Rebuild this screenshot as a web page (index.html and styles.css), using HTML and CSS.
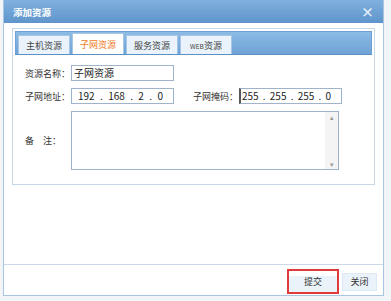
FILE: index.html
```
<!DOCTYPE html>
<html lang="zh-CN">
<head>
    <meta charset="UTF-8">
    <title>添加资源</title>
    <link rel="stylesheet" href="styles.css">
</head>
<body>
    <div class="dialog">
        <div class="dialog-title">
            <span>添加资源</span>
            <span class="close">×</span>
        </div>
        <div class="dialog-body">
            <div class="panel">
                <div class="tabs">
                    <div class="tab">主机资源</div>
                    <div class="tab active">子网资源</div>
                    <div class="tab">服务资源</div>
                    <div class="tab"><span class="latin">WEB</span>资源</div>
                </div>
                <div class="form">
                    <div class="row">
                        <label>资源名称：</label>
                        <div class="input">子网资源</div>
                    </div>
                    <div class="row">
                        <label>子网地址：</label>
                        <div class="input ip"><span>192</span>.<span>168</span>.<span>2</span>.<span>0</span></div>
                        <label class="label-right">子网掩码：</label>
                        <div class="input ip caret"><span>255</span>.<span>255</span>.<span>255</span>.<span>0</span></div>
                    </div>
                    <div class="row row-memo">
                        <label>备&emsp;注：</label>
                        <div class="textarea">
                            <div class="scroll"><span>▴</span><span>▾</span></div>
                        </div>
                    </div>
                </div>
            </div>
        </div>
        <div class="dialog-footer">
            <button class="btn btn-submit">提交</button>
            <button class="btn">关闭</button>
        </div>
    </div>
</body>
</html>
```
FILE: styles.css
```
body {
    margin: 0;
    background-color: #f2f5f8;
    font-family: "Noto Sans CJK SC", "Liberation Sans", sans-serif;
    font-size: 9px;
    color: #333;
}
.dialog {
    width: 381px;
    height: 296px;
    margin-left: 3px;
    background-color: #fff;
    border: 1px solid #a9c5e2;
    border-top: none;
    box-sizing: border-box;
    display: flex;
    flex-direction: column;
}
.dialog-title {
    height: 23px;
    background: linear-gradient(#80b0de, #5f95cc);
    color: #fff;
    font-size: 9.5px;
    font-weight: bold;
    padding: 0 9px;
    display: flex;
    align-items: center;
    justify-content: space-between;
    flex-shrink: 0;
}
.close {
    font-size: 13px;
    color: #e8f1fa;
}
.dialog-body {
    flex: 1;
    padding: 5px 8px 0 8px;
}
.panel {
    border: 1px solid #c6d7e8;
    height: 155px;
}
.tabs {
    display: flex;
    gap: 2px;
    margin: 2px 2px 0 2px;
    height: 22px;
    padding-left: 2px;
    background: linear-gradient(#8cbbe5, #6ea3d6);
    border: 1px solid #6c9fd2;
    border-bottom-color: #5d91c6;
    align-items: flex-end;
}
.tab {
    width: 52px;
    height: 19px;
    line-height: 19px;
    text-align: center;
    background-color: #eaf3fb;
    border: 1px solid #a8c6e4;
    border-bottom: none;
    color: #444;
    box-sizing: border-box;
}
.tab.active {
    background-color: #fff;
    color: #f07a1c;
    height: 21px;
    line-height: 21px;
}
.latin {
    font-size: 6.5px;
}
.form {
    padding: 10px 0 0 12px;
}
.row {
    display: flex;
    align-items: center;
    margin-bottom: 7px;
}
.row label {
    width: 46px;
    white-space: nowrap;
}
.row .label-right {
    margin-left: 19px;
}
.input {
    width: 99px;
    height: 14px;
    line-height: 14px;
    border: 1px solid #9fb4cb;
    padding-left: 2px;
    color: #222;
    font-size: 10px;
}
.ip {
    display: flex;
    justify-content: space-between;
    padding: 0 10px 0 6px;
    width: 85px;
}
.caret {
    border-left: 2px solid #555;
    padding-left: 1px;
    width: 89px;
}
.textarea {
    width: 266px;
    height: 57px;
    border: 1px solid #9fb4cb;
    display: flex;
    justify-content: flex-end;
}
.scroll {
    width: 13px;
    background-color: #f4f4f4;
    display: flex;
    flex-direction: column;
    justify-content: space-between;
    align-items: center;
    font-size: 7px;
    color: #999;
}
.dialog-footer {
    border-top: 1px solid #c9d9e9;
    height: 30px;
    display: flex;
    justify-content: flex-end;
    align-items: center;
    gap: 3px;
    padding-right: 6px;
    flex-shrink: 0;
}
.btn {
    font-family: inherit;
    font-size: 9px;
    color: #333;
    background-color: #eaf2fa;
    border: 1px solid #dce8f3;
    height: 18px;
    width: 35px;
    padding: 0;
    margin-top: 3px;
}
.btn-submit {
    width: 52px;
    height: 25px;
    border: 2px solid #e03a3a;
    background: linear-gradient(#fff 0, #fff 5px, #eaf2fa 5px);
}
```
